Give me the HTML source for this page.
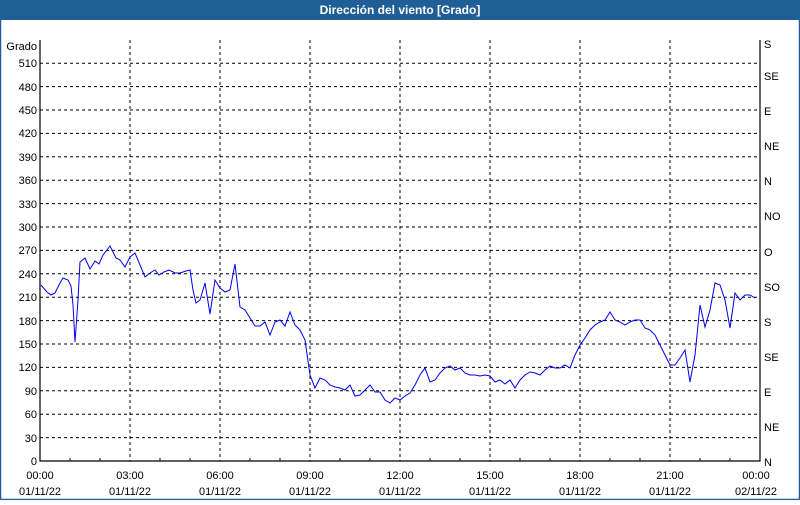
<!DOCTYPE html>
<html><head><style>
body{margin:0;width:800px;height:500px;overflow:hidden;background:#fff;font-family:"Liberation Sans",Tahoma,sans-serif;}
</style></head><body>
<svg width="800" height="500" xmlns="http://www.w3.org/2000/svg" font-family="Liberation Sans, sans-serif" font-size="11">
<rect x="0" y="0" width="800" height="500" fill="#fff"/>
<rect x="0.5" y="0.5" width="799" height="499" fill="none" stroke="#1f5f96" stroke-width="1.5"/>
<rect x="0" y="0" width="800" height="20" fill="#1f5f96"/>
<text x="400" y="14" fill="#fff" font-weight="bold" font-size="12" text-anchor="middle">Dirección del viento [Grado]</text>
<g stroke="#000" stroke-dasharray="3,3" stroke-width="1">
<line x1="40" x2="760" y1="437.6" y2="437.6"/><line x1="40" x2="760" y1="414.2" y2="414.2"/><line x1="40" x2="760" y1="390.8" y2="390.8"/><line x1="40" x2="760" y1="367.4" y2="367.4"/><line x1="40" x2="760" y1="344" y2="344"/><line x1="40" x2="760" y1="320.6" y2="320.6"/><line x1="40" x2="760" y1="297.2" y2="297.2"/><line x1="40" x2="760" y1="273.8" y2="273.8"/><line x1="40" x2="760" y1="250.4" y2="250.4"/><line x1="40" x2="760" y1="227" y2="227"/><line x1="40" x2="760" y1="203.6" y2="203.6"/><line x1="40" x2="760" y1="180.2" y2="180.2"/><line x1="40" x2="760" y1="156.8" y2="156.8"/><line x1="40" x2="760" y1="133.4" y2="133.4"/><line x1="40" x2="760" y1="110" y2="110"/><line x1="40" x2="760" y1="86.6" y2="86.6"/><line x1="40" x2="760" y1="63.2" y2="63.2"/>
<line x1="130" x2="130" y1="40" y2="461"/><line x1="220" x2="220" y1="40" y2="461"/><line x1="310" x2="310" y1="40" y2="461"/><line x1="400" x2="400" y1="40" y2="461"/><line x1="490" x2="490" y1="40" y2="461"/><line x1="580" x2="580" y1="40" y2="461"/><line x1="670" x2="670" y1="40" y2="461"/>
</g>
<g stroke="#000" stroke-width="1.2" fill="none">
<polyline points="40,40 40,461 760,461 760,40"/>
</g>
<g stroke="#000">
<line x1="70" x2="70" y1="458" y2="461"/><line x1="100" x2="100" y1="458" y2="461"/><line x1="160" x2="160" y1="458" y2="461"/><line x1="190" x2="190" y1="458" y2="461"/><line x1="250" x2="250" y1="458" y2="461"/><line x1="280" x2="280" y1="458" y2="461"/><line x1="340" x2="340" y1="458" y2="461"/><line x1="370" x2="370" y1="458" y2="461"/><line x1="430" x2="430" y1="458" y2="461"/><line x1="460" x2="460" y1="458" y2="461"/><line x1="520" x2="520" y1="458" y2="461"/><line x1="550" x2="550" y1="458" y2="461"/><line x1="610" x2="610" y1="458" y2="461"/><line x1="640" x2="640" y1="458" y2="461"/><line x1="700" x2="700" y1="458" y2="461"/><line x1="730" x2="730" y1="458" y2="461"/>
</g>
<g fill="#000" text-anchor="end">
<text x="37" y="50">Grado</text>
<text x="37" y="67">510</text><text x="37" y="91">480</text><text x="37" y="114">450</text><text x="37" y="137">420</text><text x="37" y="161">390</text><text x="37" y="184">360</text><text x="37" y="208">330</text><text x="37" y="231">300</text><text x="37" y="254">270</text><text x="37" y="278">240</text><text x="37" y="301">210</text><text x="37" y="325">180</text><text x="37" y="348">150</text><text x="37" y="371">120</text><text x="37" y="395">90</text><text x="37" y="418">60</text><text x="37" y="442">30</text><text x="37" y="465">0</text>
</g>
<g fill="#000">
<text x="764" y="48">S</text><text x="764" y="80">SE</text><text x="764" y="115">E</text><text x="764" y="150">NE</text><text x="764" y="185">N</text><text x="764" y="220">NO</text><text x="764" y="256">O</text><text x="764" y="291">SO</text><text x="764" y="326">S</text><text x="764" y="361">SE</text><text x="764" y="396">E</text><text x="764" y="431">NE</text><text x="764" y="466">N</text>
</g>
<g fill="#000" text-anchor="middle">
<text x="40" y="479">00:00</text><text x="40" y="495">01/11/22</text>
<text x="130" y="479">03:00</text><text x="130" y="495">01/11/22</text>
<text x="220" y="479">06:00</text><text x="220" y="495">01/11/22</text>
<text x="310" y="479">09:00</text><text x="310" y="495">01/11/22</text>
<text x="400" y="479">12:00</text><text x="400" y="495">01/11/22</text>
<text x="490" y="479">15:00</text><text x="490" y="495">01/11/22</text>
<text x="580" y="479">18:00</text><text x="580" y="495">01/11/22</text>
<text x="670" y="479">21:00</text><text x="670" y="495">01/11/22</text>
<text x="756" y="479">00:00</text><text x="756" y="495">02/11/22</text>
</g>
<polyline fill="none" stroke="#0000ee" stroke-width="1" points="41,285 47,292 51,295 55,293 60,283 63,278 68,280 71,286 73,305 75,342 78,300 80,262 85,258 90,269 95,261 99,264 103,255 110,246 116,258 120,260 125,267 130,257 135,253 140,265 145,277 150,273 155,270 159,275 164,272 169,270 175,273 180,273 186,271 190,270 193,290 196,303 200,300 205,283 210,314 215,280 220,288 225,292 230,290 235,264 240,307 245,310 250,318 255,326 260,326 265,322 270,335 275,322 280,320 285,326 290,312 295,325 300,330 305,340 310,375 315,388 320,378 325,380 330,385 335,387 340,388 345,390 350,385 355,396 360,395 365,390 370,385 375,392 380,392 385,400 390,403 395,398 400,400 405,396 410,393 415,385 420,375 425,368 430,382 435,380 440,373 445,368 450,366 455,370 460,368 465,373 470,375 475,375 480,376 485,375 490,376 495,382 500,380 505,384 510,380 515,388 520,380 525,375 530,372 535,373 540,375 545,370 550,366 555,368 560,368 565,365 570,368 575,355 580,345 585,338 590,330 595,325 600,322 605,320 610,312 615,320 620,322 625,325 630,322 635,320 640,320 645,328 650,330 655,335 660,345 665,355 670,365 675,365 680,358 685,350 690,382 695,355 700,305 705,327 710,310 715,283 720,285 725,300 730,328 735,293 740,300 745,295 750,295 755,298"/>
</svg>
</body></html>
